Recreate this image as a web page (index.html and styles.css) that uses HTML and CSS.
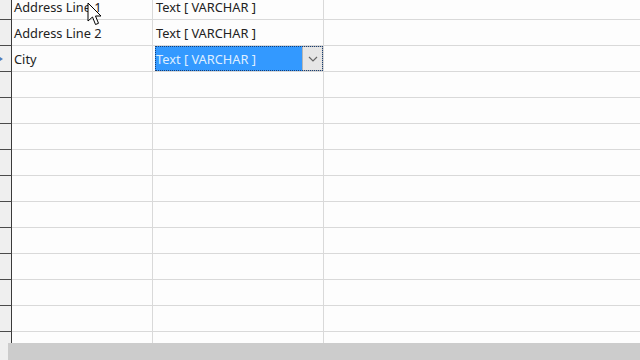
FILE: index.html
```html
<!DOCTYPE html>
<html>
<head>
<meta charset="utf-8">
<link rel="stylesheet" href="styles.css">
</head>
<body>
<div class="view">
  <div class="grid">
    <div class="row"><div class="hd"></div><div class="c1">Address Line 1</div><div class="c2">Text [ VARCHAR ]</div><div class="c3"></div></div>
    <div class="row"><div class="hd"></div><div class="c1">Address Line 2</div><div class="c2">Text [ VARCHAR ]</div><div class="c3"></div></div>
    <div class="row"><div class="hd"><span class="ind"></span></div><div class="c1">City</div><div class="c2 edit"><div class="sel"><span class="seltext">Text [ VARCHAR ]</span><span class="btn"><svg width="10" height="6" viewBox="0 0 10 6"><path d="M1 1 L5 5 L9 1" fill="none" stroke="#666" stroke-width="1.2"/></svg></span></div></div><div class="c3"></div></div>
    <div class="row"><div class="hd"></div><div class="c1"></div><div class="c2"></div><div class="c3"></div></div>
    <div class="row"><div class="hd"></div><div class="c1"></div><div class="c2"></div><div class="c3"></div></div>
    <div class="row"><div class="hd"></div><div class="c1"></div><div class="c2"></div><div class="c3"></div></div>
    <div class="row"><div class="hd"></div><div class="c1"></div><div class="c2"></div><div class="c3"></div></div>
    <div class="row"><div class="hd"></div><div class="c1"></div><div class="c2"></div><div class="c3"></div></div>
    <div class="row"><div class="hd"></div><div class="c1"></div><div class="c2"></div><div class="c3"></div></div>
    <div class="row"><div class="hd"></div><div class="c1"></div><div class="c2"></div><div class="c3"></div></div>
    <div class="row"><div class="hd"></div><div class="c1"></div><div class="c2"></div><div class="c3"></div></div>
    <div class="row"><div class="hd"></div><div class="c1"></div><div class="c2"></div><div class="c3"></div></div>
    <div class="row"><div class="hd"></div><div class="c1"></div><div class="c2"></div><div class="c3"></div></div>
    <div class="row"><div class="hd"></div><div class="c1"></div><div class="c2"></div><div class="c3"></div></div>
  </div>
  <svg class="cursor" width="15" height="24" viewBox="0 0 15 24"><path d="M1 1 L1 19 L5.5 15 L8.5 22.5 L11.5 21.3 L8.5 14 L14 14 Z" fill="#fff" stroke="#000" stroke-width="1" stroke-linejoin="round"/></svg>
</div>
<div class="footer"><div class="fl"></div><div class="fr"></div></div>
</body>
</html>
```
FILE: styles.css
```css
html, body {
  margin: 0;
  padding: 0;
  width: 640px;
  height: 360px;
  overflow: hidden;
  background: #fdfdfd;
  font-family: "Noto Sans", "Open Sans", sans-serif;
  font-size: 12.8px;
  color: #222;
}
body {
  display: flex;
  flex-direction: column;
}
.view {
  position: relative;
  height: 343px;
  overflow: hidden;
  flex: none;
}
.grid {
  margin-top: -6px;
  display: flex;
  flex-direction: column;
}
.row {
  display: grid;
  grid-template-columns: 12px 141px 171px 1fr;
  height: 26px;
  box-sizing: border-box;
}
.row > div {
  box-sizing: border-box;
  border-bottom: 1px solid #d9d9d9;
  border-right: 1px solid #d9d9d9;
  display: flex;
  align-items: center;
  white-space: nowrap;
  overflow: hidden;
}
.row > .hd {
  background: #efefef;
  border-bottom: 1px solid #4a4a4a;
  border-right: 1px solid #3a3a3a;
  position: relative;
}
.row > .c1 { padding-left: 2px; }
.row > .c2 { padding-left: 3px; }
.row > .c3 { border-right: none; }
.ind {
  width: 0;
  height: 0;
  border-top: 2px solid transparent;
  border-bottom: 2px solid transparent;
  border-left: 3px solid #4a7fc0;
}
.row > .edit {
  padding: 0 0 0 2px;
  align-items: stretch;
}
.sel {
  flex: 1;
  display: flex;
  align-items: center;
  background: #3399ff;
  outline: 1px dotted #1a3f73;
  outline-offset: -1px;
  color: #dfeeff;
}
.seltext {
  flex: 1;
  padding-left: 1px;
}
.btn {
  width: 21px;
  align-self: stretch;
  background: #e6e6e6;
  border: 1px solid #b5b5b5;
  box-sizing: border-box;
  display: flex;
  align-items: center;
  justify-content: center;
}
.cursor {
  position: absolute;
  left: 87px;
  top: 2px;
}
.footer {
  flex: 1;
  display: flex;
}
.fl {
  width: 8px;
  background: #efefef;
}
.fr {
  flex: 1;
  background: #cccccc;
}
```
